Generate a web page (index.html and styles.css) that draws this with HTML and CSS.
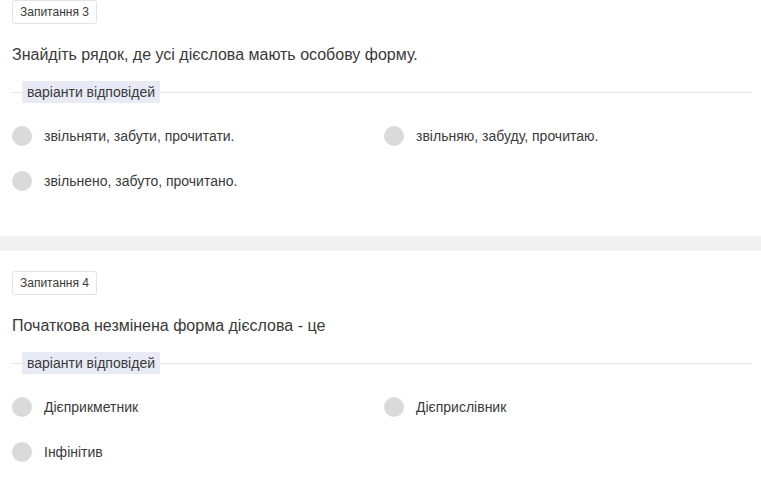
FILE: index.html
```html
<!DOCTYPE html>
<html lang="uk">
<head>
<meta charset="utf-8">
<link rel="stylesheet" href="styles.css">
</head>
<body>
<div class="page">
  <section class="question first">
    <div class="badge">Запитання 3</div>
    <div class="qtext">Знайдіть рядок, де усі дієслова мають особову форму.</div>
    <div class="legend"><span class="legend-label">варіанти відповідей</span></div>
    <div class="options">
      <div class="option"><span class="radio"></span><span class="otext">звільняти, забути, прочитати.</span></div>
      <div class="option"><span class="radio"></span><span class="otext">звільняю, забуду, прочитаю.</span></div>
      <div class="option"><span class="radio"></span><span class="otext">звільнено, забуто, прочитано.</span></div>
    </div>
  </section>
  <div class="band"></div>
  <section class="question">
    <div class="badge">Запитання 4</div>
    <div class="qtext">Початкова незмінена форма дієслова - це</div>
    <div class="legend"><span class="legend-label">варіанти відповідей</span></div>
    <div class="options">
      <div class="option"><span class="radio"></span><span class="otext">Дієприкметник</span></div>
      <div class="option"><span class="radio"></span><span class="otext">Дієприслівник</span></div>
      <div class="option"><span class="radio"></span><span class="otext">Інфінітив</span></div>
    </div>
  </section>
</div>
</body>
</html>
```

FILE: styles.css
```css
html, body {
  margin: 0;
  padding: 0;
  background: #ffffff;
}
body {
  font-family: "Liberation Sans", Arial, sans-serif;
  color: #3a3a3a;
}
.page {
  width: 761px;
}
.question {
  padding: 20px 9px 45px 12px;
}
.question.first {
  padding-top: 0;
}
.badge {
  display: inline-block;
  box-sizing: border-box;
  height: 24px;
  line-height: 22px;
  padding: 0 7px;
  border: 1px solid #e3e3e3;
  border-radius: 3px;
  font-size: 12px;
  color: #3a3a3a;
  background: #fff;
}
.qtext {
  margin-top: 21px;
  font-size: 16px;
  line-height: 20px;
  color: #3a3a3a;
}
.legend {
  margin-top: 16px;
  display: flex;
  align-items: center;
}
.legend::before {
  content: "";
  width: 10px;
  height: 1px;
  background: #e6e6e6;
}
.legend::after {
  content: "";
  flex: 1;
  height: 1px;
  background: #e6e6e6;
}
.legend-label {
  background: #e8eaf6;
  font-size: 14px;
  line-height: 22px;
  padding: 0 5px;
  color: #3a3a3a;
}
.options {
  margin-top: 23px;
  display: grid;
  grid-template-columns: 372px 1fr;
  row-gap: 25px;
}
.option {
  display: flex;
  align-items: center;
  height: 20px;
}
.radio {
  width: 20px;
  height: 20px;
  border-radius: 50%;
  background: #dadada;
  flex: none;
}
.otext {
  margin-left: 12px;
  font-size: 14px;
  color: #3a3a3a;
}
.band {
  height: 15px;
  background: #f1f1f1;
}
```
